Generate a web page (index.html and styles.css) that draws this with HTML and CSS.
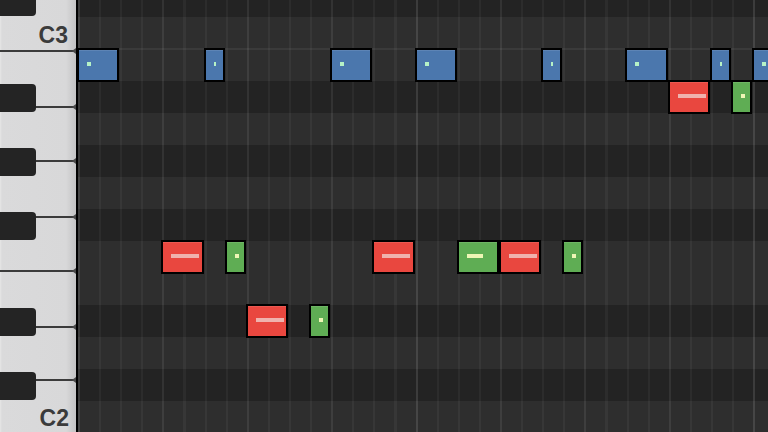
FILE: index.html
```html
<!DOCTYPE html>
<html lang="en">
<head>
    <meta charset="UTF-8">
    <meta name="viewport" content="width=device-width, initial-scale=1.0">
    <title>Piano Roll</title>
    <link rel="stylesheet" href="styles.css">
</head>
<body>
    <div class="editor">
        <!-- keyboard -->
        <div class="keyboard">
            <div class="white-keys">
                <div class="white-key key-c3"><span class="key-label">C3</span></div>
                <div class="white-key key-b"></div>
                <div class="white-key key-a"></div>
                <div class="white-key key-g"></div>
                <div class="white-key key-f"></div>
                <div class="white-key key-e"></div>
                <div class="white-key key-d"></div>
                <div class="white-key key-c2"><span class="key-label">C2</span></div>
            </div>
            <div class="black-key bk-cs3"></div>
            <div class="black-key bk-as"></div>
            <div class="black-key bk-gs"></div>
            <div class="black-key bk-fs"></div>
            <div class="black-key bk-ds"></div>
            <div class="black-key bk-cs2"></div>
        </div>

        <!-- note grid -->
        <div class="roll">
            <div class="row dark"></div><!-- C#3 -->
            <div class="row light octave"></div><!-- C3 -->
            <div class="row light"><!-- B2 -->
                <div class="note blue" style="grid-column: 1 / span 2"><span class="vel" style="width: 4px"></span></div>
                <div class="note blue" style="grid-column: 7 / span 1"><span class="vel" style="width: 2px"></span></div>
                <div class="note blue" style="grid-column: 13 / span 2"><span class="vel" style="width: 4px"></span></div>
                <div class="note blue" style="grid-column: 17 / span 2"><span class="vel" style="width: 4px"></span></div>
                <div class="note blue" style="grid-column: 23 / span 1"><span class="vel" style="width: 2px"></span></div>
                <div class="note blue" style="grid-column: 27 / span 2"><span class="vel" style="width: 4px"></span></div>
                <div class="note blue" style="grid-column: 31 / span 1"><span class="vel" style="width: 2px"></span></div>
                <div class="note blue" style="grid-column: 33 / span 2"><span class="vel" style="width: 4px"></span></div>
            </div>
            <div class="row dark"><!-- A#2 -->
                <div class="note red" style="grid-column: 29 / span 2"><span class="vel" style="width: 28px"></span></div>
                <div class="note green" style="grid-column: 32 / span 1"><span class="vel" style="width: 4px"></span></div>
            </div>
            <div class="row light"></div><!-- A2 -->
            <div class="row dark"></div><!-- G#2 -->
            <div class="row light"></div><!-- G2 -->
            <div class="row dark"></div><!-- F#2 -->
            <div class="row light"><!-- F2 -->
                <div class="note red" style="grid-column: 5 / span 2"><span class="vel" style="width: 28px"></span></div>
                <div class="note green" style="grid-column: 8 / span 1"><span class="vel" style="width: 4px"></span></div>
                <div class="note red" style="grid-column: 15 / span 2"><span class="vel" style="width: 28px"></span></div>
                <div class="note green" style="grid-column: 19 / span 2"><span class="vel" style="width: 16px"></span></div>
                <div class="note red" style="grid-column: 21 / span 2"><span class="vel" style="width: 28px"></span></div>
                <div class="note green" style="grid-column: 24 / span 1"><span class="vel" style="width: 4px"></span></div>
            </div>
            <div class="row light"></div><!-- E2 -->
            <div class="row dark"><!-- D#2 -->
                <div class="note red" style="grid-column: 9 / span 2"><span class="vel" style="width: 28px"></span></div>
                <div class="note green" style="grid-column: 12 / span 1"><span class="vel" style="width: 4px"></span></div>
            </div>
            <div class="row light"></div><!-- D2 -->
            <div class="row dark"></div><!-- C#2 -->
            <div class="row light"></div><!-- C2 -->
        </div>
    </div>
</body>
</html>
```

FILE: styles.css
```css
/* base */
body {
    margin: 0;
    background-color: #242424;
    font-family: "Liberation Sans", Arial, sans-serif;
    overflow: hidden;
}

.editor {
    display: flex;
    width: 768px;
    height: 432px;
    overflow: hidden;
}

/* keyboard */
.keyboard {
    position: relative;
    flex: none;
    width: 76px;
    border-right: 2px solid #000;
    background: linear-gradient(to right, #e6e6e6 0, #dadadb 2px, #d8d8d9 66px, #c3c3c4 76px);
}

.white-keys {
    margin-top: -4px;
}

.white-key {
    position: relative;
    box-sizing: border-box;
    display: flex;
    justify-content: flex-end;
    align-items: flex-end;
    border-bottom: 2px solid #3b3b3b;
}
/* little notch where the key line meets the edge */
.white-key::after {
    content: "";
    position: absolute;
    right: 0;
    bottom: -4px;
    border-top: 3px solid transparent;
    border-bottom: 3px solid transparent;
    border-right: 4px solid #4a4a4a;
}

.key-c3 { height: 56px; padding: 0 8px 3.5px 0; }
.key-b  { height: 56px; }
.key-a  { height: 54px; }
.key-g  { height: 56px; }
.key-f  { height: 54px; }
.key-e  { height: 56px; }
.key-d  { height: 53px; }
.key-c2 { height: 54px; padding: 0 7px 5.5px 0; border-bottom: none; }
.key-c2::after { display: none; }

.key-label {
    font-size: 23px;
    line-height: 23px;
    font-weight: bold;
    color: #3b3b3b;
}

.black-key {
    position: absolute;
    left: 0;
    width: 36px;
    height: 28px;
    background-color: #242424;
    border-radius: 0 4px 4px 0;
}
.bk-cs3 { top: -12px; }
.bk-as  { top: 84px; }
.bk-gs  { top: 148px; }
.bk-fs  { top: 212px; }
.bk-ds  { top: 308px; }
.bk-cs2 { top: 372px; }

/* note grid */
.roll {
    flex: 1;
    margin-top: -15px;
}

.row {
    position: relative;
    display: grid;
    grid-template-columns: repeat(33, 21.1px);
    height: 32px;
    background-image:
        repeating-linear-gradient(to right, rgba(255, 255, 255, 0.045) 0 2px, transparent 2px 337.6px),
        repeating-linear-gradient(to right, rgba(255, 255, 255, 0.035) 0 2px, transparent 2px 84.4px),
        repeating-linear-gradient(to right, rgba(255, 255, 255, 0.045) 0 2px, transparent 2px 21.1px);
}
.row.light { background-color: #2e2e2e; }
.row.dark  { background-color: #232323; }

.row.octave::after {
    content: "";
    position: absolute;
    left: 0;
    right: 0;
    bottom: -1px;
    height: 2px;
    background-color: rgba(255, 255, 255, 0.06);
    z-index: 1;
}

.note {
    position: relative;
    z-index: 2;
    box-sizing: border-box;
    margin: -1px 1px -1px -1px;
    border: 2px solid #000;
    box-shadow: inset 0 1px 0 rgba(255, 255, 255, 0.1);
}
.note.blue  { background-color: #4b77ad; }
.note.red   { background-color: #e9473f; }
.note.green { background-color: #5fad54; }

.vel {
    display: block;
    height: 4px;
    margin: 12px 0 0 8px;
}
.blue .vel  { background-color: #b6f2c6; }
.red .vel   { background-color: #efb2ad; }
.green .vel { background-color: #eef6b5; }
```
